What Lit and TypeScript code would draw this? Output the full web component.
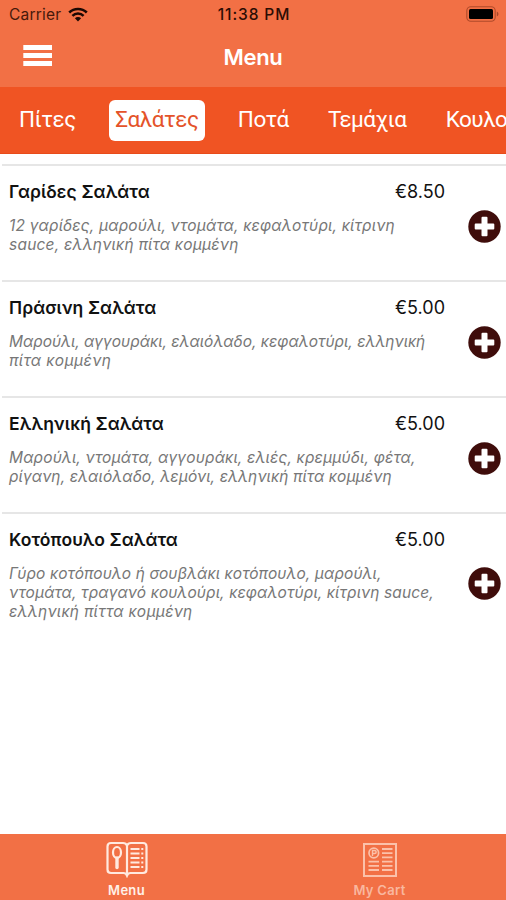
import { LitElement, html, css } from "lit";
import { customElement, property } from "lit/decorators.js";
import { classMap } from "lit/directives/class-map.js";
import { styleMap } from "lit/directives/style-map.js";

interface Line {
  text: string;
  tracking: number;
}

interface Dish {
  name: string;
  price: string;
  lines: Line[];
}

const CATEGORIES = ["Πίτες", "Σαλάτες", "Ποτά", "Τεμάχια", "Κουλούρια"];

const DISHES: Dish[] = [
  {
    name: "Γαρίδες Σαλάτα",
    price: "€8.50",
    lines: [
      { text: "12 γαρίδες, μαρούλι, ντομάτα, κεφαλοτύρι, κίτρινη", tracking: 0.17 },
      { text: "sauce, ελληνική πίτα κομμένη", tracking: 0.22 },
    ],
  },
  {
    name: "Πράσινη Σαλάτα",
    price: "€5.00",
    lines: [
      { text: "Μαρούλι, αγγουράκι, ελαιόλαδο, κεφαλοτύρι, ελληνική", tracking: 0 },
      { text: "πίτα κομμένη", tracking: 0.4 },
    ],
  },
  {
    name: "Ελληνική Σαλάτα",
    price: "€5.00",
    lines: [
      { text: "Μαρούλι, ντομάτα, αγγουράκι, ελιές, κρεμμύδι, φέτα,", tracking: 0.16 },
      { text: "ρίγανη, ελαιόλαδο, λεμόνι, ελληνική πίτα κομμένη", tracking: 0.1 },
    ],
  },
  {
    name: "Κοτόπουλο Σαλάτα",
    price: "€5.00",
    lines: [
      { text: "Γύρο κοτόπουλο ή σουβλάκι κοτόπουλο, μαρούλι,", tracking: 0.1 },
      { text: "ντομάτα, τραγανό κουλούρι, κεφαλοτύρι, κίτρινη sauce,", tracking: 0.11 },
      { text: "ελληνική πίττα κομμένη", tracking: 0.28 },
    ],
  },
];

@customElement("dish-row")
export class DishRow extends LitElement {
  @property({ attribute: false }) dish!: Dish;

  static styles = css`
    :host {
      display: flex;
      align-items: center;
      box-sizing: border-box;
      min-height: 116px;
      margin-left: 2px;
      padding: 14px 5.5px 24px 7px;
      border-top: 2px solid #e6e6e6;
    }
    .info {
      width: 436px;
      flex: none;
      align-self: flex-start;
    }
    .head {
      display: flex;
      justify-content: space-between;
      height: 24px;
      color: #111;
    }
    .name {
      font: 600 17.5px/24px Inter, sans-serif;
      letter-spacing: 0.1px;
    }
    .price {
      font: 400 18px/24px Inter, sans-serif;
    }
    .desc {
      margin-top: 12px;
      font: italic 400 15.5px/19.3px Inter, sans-serif;
      color: #777;
      white-space: nowrap;
    }
    .line {
      height: 19.3px;
    }
    .add {
      width: 33px;
      height: 33px;
      margin: 18px 0 0 auto;
      padding: 0;
      border: 0;
      background: none;
      display: block;
    }
    .add svg {
      display: block;
    }
  `;

  render() {
    return html`
      <div class="info">
        <div class="head">
          <span class="name">${this.dish.name}</span>
          <span class="price">${this.dish.price}</span>
        </div>
        <div class="desc">
          ${this.dish.lines.map(
            (line) =>
              html`<div class="line" style=${styleMap({ letterSpacing: `${line.tracking}px` })}>${line.text}</div>`
          )}
        </div>
      </div>
      <button class="add" aria-label="Add">
        <svg width="33" height="33" viewBox="0 0 33 33">
          <circle cx="16.5" cy="16.5" r="16.2" fill="#3f0d0b" />
          <path
            d="M14.5 6.7h4a1 1 0 0 1 1 1v5.8h5.8a1 1 0 0 1 1 1v4a1 1 0 0 1-1 1h-5.8v5.8a1 1 0 0 1-1 1h-4a1 1 0 0 1-1-1v-5.8H7.7a1 1 0 0 1-1-1v-4a1 1 0 0 1 1-1h5.8V7.7a1 1 0 0 1 1-1z"
            fill="#fff"
          />
        </svg>
      </button>
    `;
  }
}

@customElement("app-root")
export class AppRoot extends LitElement {
  @property() selected = "Σαλάτες";

  static styles = css`
    :host {
      display: flex;
      flex-direction: column;
      height: 900px;
      overflow: hidden;
      background: #fff;
      font-family: Inter, "Liberation Sans", sans-serif;
    }
    .top {
      flex: none;
      height: 87px;
      background: #f27045;
    }
    .status {
      display: grid;
      grid-template-columns: 1fr auto 1fr;
      align-items: center;
      height: 28px;
      padding: 0 7px 0 9px;
      box-sizing: border-box;
      font-size: 15.5px;
      color: #47190b;
    }
    .carrier {
      display: flex;
      align-items: center;
      gap: 7px;
      letter-spacing: 0.2px;
    }
    .clock {
      font-weight: 500;
      font-size: 15.5px;
      letter-spacing: 0.9px;
      color: #2b0d04;
    }
    .battery {
      justify-self: end;
    }
    .status svg,
    .burger svg,
    .tab svg {
      display: block;
    }
    .nav {
      display: grid;
      grid-template-columns: 1fr auto 1fr;
      align-items: center;
      height: 58px;
      padding: 0 23px;
    }
    .burger {
      padding: 0 0 4px;
      border: 0;
      background: none;
      width: 30px;
    }
    .title {
      font-size: 22px;
      font-weight: 600;
      letter-spacing: -0.3px;
      color: #fff;
    }
    .categories {
      flex: none;
      display: flex;
      align-items: center;
      box-sizing: border-box;
      height: 67px;
      padding: 0 0 0 12.5px;
      gap: 26.3px;
      overflow: hidden;
      background: #f05423;
      border-bottom: 1px solid #e84b1a;
    }
    .category {
      flex: none;
      height: 41px;
      padding: 0 6.5px;
      border-radius: 6px;
      font: 400 22.5px/39px Roboto, sans-serif;
      letter-spacing: -0.5px;
      color: #fff;
    }
    .category.on {
      background: #fff;
      color: #e4532a;
    }
    .list {
      flex: 1;
      padding-top: 9.5px;
    }
    .tabs {
      flex: none;
      display: grid;
      grid-template-columns: 1fr 1fr;
      height: 66px;
      background: #f27045;
    }
    .tab {
      display: flex;
      flex-direction: column;
      align-items: center;
      padding-top: 7px;
      font-size: 13px;
      font-weight: 600;
      line-height: 16px;
      letter-spacing: 0.3px;
      gap: 4px;
      color: #fff0e9;
    }
    .tab.off {
      color: #f9b79f;
    }
  `;

  render() {
    return html`
      <header class="top">
        <div class="status">
          <span class="carrier">
            Carrier
            <svg width="20" height="15" viewBox="0 0 20 15" fill="none" stroke="#1c0803" stroke-width="2.5">
              <path d="M1.2 5.5a12.5 12.5 0 0 1 17.6 0M4.4 8.8a8 8 0 0 1 11.2 0" />
              <path d="M10 14.5 6.9 11.3a4.4 4.4 0 0 1 6.2 0z" fill="#1c0803" stroke="none" />
            </svg>
          </span>
          <span class="clock">11:38 PM</span>
          <svg class="battery" width="33" height="16" viewBox="0 0 33 16">
            <rect x="0.8" y="0.8" width="28.4" height="14.4" rx="4" fill="none" stroke="#b04a2a" stroke-width="1.1" />
            <rect x="3" y="3" width="24" height="10" rx="1.5" fill="#000" />
            <path d="M30.8 5.5q1.7 0.8 1.7 2.5t-1.7 2.5z" fill="#a9472a" />
          </svg>
        </div>
        <div class="nav">
          <button class="burger" aria-label="Open menu">
            <svg width="30" height="21" viewBox="0 0 30 21" fill="#fff">
              <rect x="0.3" y="0" width="28.7" height="5" />
              <rect x="0.3" y="8" width="28.7" height="5" />
              <rect x="0.3" y="16" width="28.7" height="5" />
            </svg>
          </button>
          <span class="title">Menu</span>
        </div>
      </header>
      <nav class="categories">
        ${CATEGORIES.map(
          (c) => html`<span class=${classMap({ category: true, on: c === this.selected })}>${c}</span>`
        )}
      </nav>
      <main class="list">${DISHES.map((d) => html`<dish-row .dish=${d}></dish-row>`)}</main>
      <footer class="tabs">
        <div class="tab">
          <svg width="42" height="37" viewBox="0 0 42 37" fill="none" stroke="#ffe9df" stroke-width="2.2">
            <path d="M21 4.5Q20 2 17 2H5Q1.500 2 1.500 5.500V28.500q0 3.500 3.500 3.500h12.500q2.500 0 3.500 2.500 1-2.500 3.500-2.500H37q3.500 0 3.500-3.500V5.500Q40.500 2 37 2H25q-3 0-4 2.500zV34.500" />
            <ellipse cx="11" cy="11.500" rx="4" ry="5.500" />
            <path d="M11 17v9.500" stroke-width="3.400" stroke-linecap="round" />
            <path d="M24.500 8h9M24.500 12.500h9M24.500 17h9M24.500 21.500h9M24.500 26h9M35.300 8h2M35.300 12.500h2M35.300 17h2M35.300 21.500h2M35.300 26h2" stroke-width="1.800" />
          </svg>
          Menu
        </div>
        <div class="tab off">
          <svg width="34" height="37" viewBox="0 0 34 37" fill="none" stroke="#fbc1aa" stroke-width="2">
            <rect x="1" y="3" width="32" height="32" />
            <circle cx="10.800" cy="12" r="4.800" stroke-width="1.700" />
            <path d="M9.500 15v-5.500h2q1.700 0 1.700 1.500t-1.700 1.500h-2" stroke-width="1.400" />
            <path d="M19 8h10.500M19 12.200h10.500M19 16.400h10.500M5.500 20.600h10.500M19 20.600h10.500M5.500 24.800h10.500M19 24.800h10.500M5.500 29h10.500M19 29h10.500" stroke-width="1.800" />
          </svg>
          My Cart
        </div>
      </footer>
    `;
  }
}
